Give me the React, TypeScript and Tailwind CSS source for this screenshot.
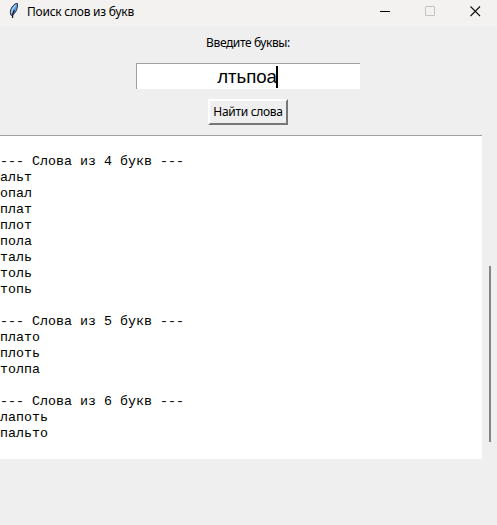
const groups = [
  { size: 4, words: ['альт', 'опал', 'плат', 'плот', 'пола', 'таль', 'толь', 'топь'] },
  { size: 5, words: ['плато', 'плоть', 'толпа'] },
  { size: 6, words: ['лапоть', 'пальто'] },
];

function Feather() {
  return (
    <svg width="16" height="18" viewBox="0 0 16 18" className="ml-[6px] mt-[2px] shrink-0">
      <path d="M5 13.2 C3.4 9.8 5 5.3 8 2.9 C9.3 1.6 10.8 1.2 11.5 1.6 C11.7 5 11 8 9.2 10.5 C8.2 12 7 13 5.8 13.4 Z" fill="#5b9bea" stroke="#2b3038" strokeWidth="1" />
      <path d="M9.7 3.2 C7.3 5.6 5.9 8.3 5.5 11.2" fill="none" stroke="#b9d8f5" strokeWidth="1.1" />
      <path d="M8.3 8 C6.8 10.5 6.5 13 6.5 16" fill="none" stroke="#111" strokeWidth="1.3" />
    </svg>
  );
}

export default function App() {
  return (
    <div className="flex h-[525px] w-[497px] flex-col overflow-hidden bg-[#efefef] font-['Noto_Sans',sans-serif] text-[12px] text-black">
      <header className="flex h-[27px] shrink-0 items-start bg-[#f3f2f0]">
        <Feather />
        <span className="ml-[5px] mt-[4px] whitespace-nowrap leading-[16px] tracking-[-0.24px]">Поиск слов из букв</span>
        <div className="ml-auto mr-[16px] mt-[6px] flex gap-[35px]">
          <svg width="10" height="11" viewBox="0 0 10 11"><path d="M0 5.5H10" stroke="#000" /></svg>
          <svg width="10" height="11" viewBox="0 0 10 11"><rect x=".5" y=".5" width="9" height="9" rx=".5" fill="none" stroke="#c4c3c1" /></svg>
          <svg width="11" height="11" viewBox="0 0 11 11"><path d="M.5 .5L10 10M10 .5L.5 10" stroke="#111" strokeWidth="1.1" /></svg>
        </div>
      </header>
      <main className="flex flex-col">
        <div className="flex w-[496px] flex-col items-center">
          <label className="mt-[8px] h-[16px] whitespace-nowrap leading-[16px] tracking-[-0.4px]">Введите буквы:</label>
          <div className="mt-[12px] flex h-[26px] w-[224px] items-center justify-center border-l border-t border-[#a0a0a0] bg-white pr-[2px] font-['Liberation_Sans',sans-serif] text-[18.67px] leading-[24px]">
            <span className="tracking-[-0.1px]">лтьпоа</span>
            <span className="-ml-px h-[22px] w-[2px] bg-black" />
          </div>
          <button className="mt-[10px] flex h-[26px] w-[80px] items-center justify-center whitespace-nowrap border-2 border-b-[#777] border-l-white border-r-[#777] border-t-white bg-[#efefef] leading-[16px] tracking-[-0.3px]">
            Найти слова
          </button>
        </div>
        <div className="mt-[10px] flex h-[324px]">
          <div className="w-[482px] border-t border-[#a0a0a0] bg-white pt-[2px] font-['Liberation_Mono',monospace] text-[13.33px] leading-[16px]">
            {groups.map((g) => (
              <div key={g.size} className="whitespace-pre pt-[16px]">
                <div>{`--- Слова из ${g.size} букв ---`}</div>
                {g.words.map((w) => <div key={w}>{w}</div>)}
              </div>
            ))}
          </div>
          <div className="ml-[7px] mt-[131px] h-[176px] w-[2px] bg-[#858585]" />
        </div>
      </main>
    </div>
  );
}
